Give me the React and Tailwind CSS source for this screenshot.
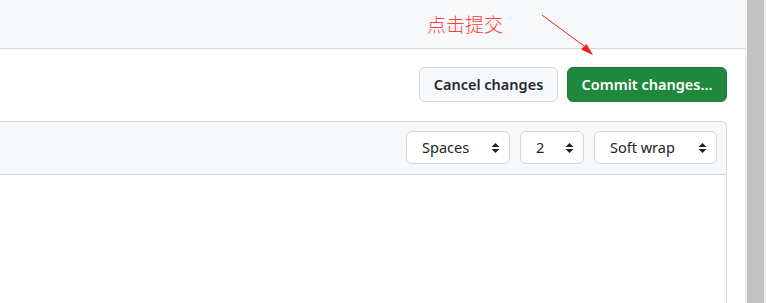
import React from "react";

const SelectBox = ({ label, width }) => (
  <div
    className={`flex h-[33px] items-center justify-between rounded-md border border-[#d0d7de] bg-white pl-[15px] pr-[9px] text-[14.5px] text-[#1f2328] ${width}`}
  >
    <span>{label}</span>
    <svg width="9" height="12" viewBox="0 0 9 12" className="text-[#1f2328]">
      <path d="M4.5 1 L8.5 5 L0.5 5 Z" fill="currentColor" />
      <path d="M4.5 11 L8.5 7 L0.5 7 Z" fill="currentColor" />
    </svg>
  </div>
);

const App = () => {
  return (
    <div
      className="flex h-[303px] w-[766px] overflow-hidden bg-white"
      style={{ fontFamily: '"Noto Sans", "Liberation Sans", sans-serif' }}
    >
      <div className="relative flex flex-1 flex-col">
        <div className="h-[49px] border-b border-[#d0d7de] bg-[#f6f8fa]" />

        {/* annotation */}
        <span
          className="absolute left-[427px] top-[11px] text-[19px] font-light leading-[26px] text-[#ff4040]"
          style={{ fontFamily: '"Noto Sans CJK SC", sans-serif' }}
        >
          点击提交
        </span>
        <svg
          className="absolute left-[538px] top-[12px]"
          width="62"
          height="48"
          viewBox="0 0 62 48"
        >
          <line x1="4" y1="3" x2="50" y2="37" stroke="#ff1a1a" strokeWidth="1" />
          <path d="M55 43 L43 37.5 L48.5 32 Z" fill="#ff1a1a" />
        </svg>

        <div className="flex justify-end gap-[9px] pr-[18px] pt-[18px]">
          <button className="h-[35px] w-[139px] rounded-md border border-[#d0d7de] bg-[#f6f8fa] text-[14.5px] font-semibold text-[#24292f]">
            Cancel changes
          </button>
          <button className="h-[35px] w-[160px] rounded-md border border-[#1a7f37] bg-[#1f883d] text-[14.5px] font-semibold text-white">
            Commit changes...
          </button>
        </div>

        <div className="ml-[-10px] mr-[18px] mt-[19px] flex flex-1 flex-col rounded-tr-md border border-b-0 border-[#d0d7de]">
          <div className="flex h-[53px] items-start justify-end gap-[10px] rounded-tr-md border-b border-[#d0d7de] bg-[#f6f8fa] pr-[9px] pt-[9px]">
            <SelectBox label="Spaces" width="w-[104px]" />
            <SelectBox label="2" width="w-[64px]" />
            <SelectBox label="Soft wrap" width="w-[123px]" />
          </div>
          <div className="flex-1 bg-white" />
        </div>
      </div>

      <div className="flex w-[21px] bg-[#f1f1f1] px-[2px]">
        <div className="w-full bg-[#c1c1c1]" />
      </div>
    </div>
  );
};

export default App;
